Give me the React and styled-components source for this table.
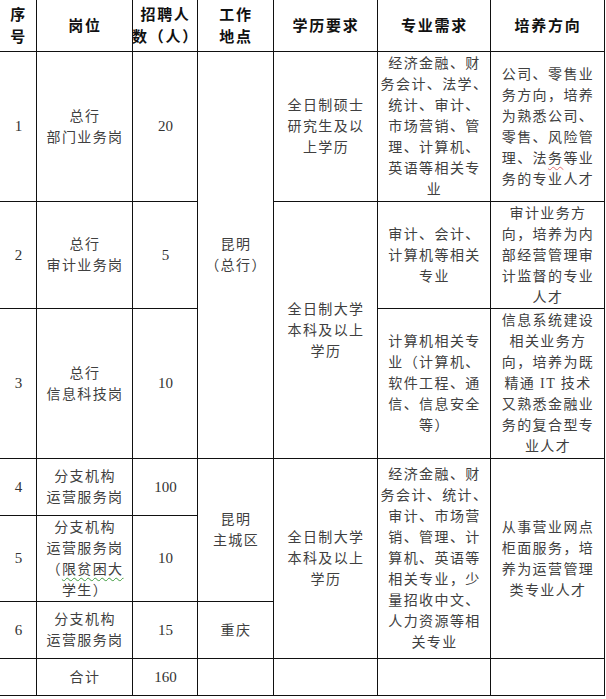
import React from "react";
import styled, {createGlobalStyle} from "styled-components";

const GlobalStyle = createGlobalStyle`
  body {
    margin: 0;
    background: #fff;
  }
`

const Sheet = styled.div`
  display: grid;
  grid-template-columns: 37px 96px 65px 76px 104px 113px 114px;
  grid-template-rows: 52px 150px 107px 150px 57px 86px 57px 37px;
  width: 605px;
  font-family: "Liberation Serif", "Noto Sans CJK SC", serif;
`

const Cell = styled.div`
  grid-column: ${p => p.$col};
  grid-row: ${p => p.$row} / span ${p => p.$span || 1};
  box-sizing: border-box;
  border-right: 1px solid #111;
  border-bottom: 1px solid #111;
  display: flex;
  flex-direction: column;
  align-items: center;
  justify-content: center;
  text-align: center;
  padding-left: 1px;
  font-size: 14px;
  line-height: 21px;
  letter-spacing: 1.4px;
  color: #404040;
`

const HeadCell = styled(Cell)`
  font-size: 15px;
  font-weight: 700;
  line-height: 22px;
  letter-spacing: 1.7px;
  color: #111;
`

const NumCell = styled(Cell)`
  font-size: 15px;
  letter-spacing: 0;
  color: #333;
`

const Line = styled.span`
  display: block;
  white-space: nowrap;
`

const Squiggle = styled.span`
  text-decoration: underline wavy ${p => p.$color};
  text-decoration-thickness: 1px;
  text-underline-offset: 3px;
`

const headers = [
    ["序", "号"],
    ["岗位"],
    ["招聘人", "数（人）"],
    ["工作", "地点"],
    ["学历要求"],
    ["专业需求"],
    ["培养方向"],
]

const numbers = [
    {row: 2, col: 1, text: "1"},
    {row: 3, col: 1, text: "2"},
    {row: 4, col: 1, text: "3"},
    {row: 5, col: 1, text: "4"},
    {row: 6, col: 1, text: "5"},
    {row: 7, col: 1, text: "6"},
    {row: 8, col: 1, text: ""},
    {row: 2, col: 3, text: "20"},
    {row: 3, col: 3, text: "5"},
    {row: 4, col: 3, text: "10"},
    {row: 5, col: 3, text: "100"},
    {row: 6, col: 3, text: "10"},
    {row: 7, col: 3, text: "15"},
    {row: 8, col: 3, text: "160"},
]

const bachelor = ["全日制大学", "本科及以上", "学历"]

const cells = [
    {row: 2, col: 2, lines: ["总行", "部门业务岗"]},
    {row: 3, col: 2, lines: ["总行", "审计业务岗"]},
    {row: 4, col: 2, lines: ["总行", "信息科技岗"]},
    {row: 5, col: 2, lines: ["分支机构", "运营服务岗"]},
    {
        row: 6, col: 2, lines: [
            "分支机构",
            "运营服务岗",
            <>（<Squiggle $color="#3f9a3f">限贫困大</Squiggle></>,
            "学生）",
        ]
    },
    {row: 7, col: 2, lines: ["分支机构", "运营服务岗"]},
    {row: 8, col: 2, lines: ["合计"]},

    {row: 2, col: 4, span: 3, lines: ["昆明", "（总行）"]},
    {row: 5, col: 4, span: 2, lines: ["昆明", "主城区"]},
    {row: 7, col: 4, lines: ["重庆"]},
    {row: 8, col: 4, lines: []},

    {row: 2, col: 5, lines: ["全日制硕士", "研究生及以", "上学历"]},
    {row: 3, col: 5, span: 2, lines: bachelor},
    {row: 5, col: 5, span: 3, lines: bachelor},
    {row: 8, col: 5, lines: []},

    {
        row: 2, col: 6, lines: [
            "经济金融、财", "务会计、法学、", "统计、审计、", "市场营销、管",
            "理、计算机、", "英语等相关专", "业",
        ]
    },
    {row: 3, col: 6, lines: ["审计、会计、", "计算机等相关", "专业"]},
    {row: 4, col: 6, lines: ["计算机相关专", "业（计算机、", "软件工程、通", "信、信息安全", "等）"]},
    {
        row: 5, col: 6, span: 3, lines: [
            "经济金融、财", "务会计、统计、", "审计、市场营", "销、管理、计", "算机、英语等",
            "相关专业，少", "量招收中文、", "人力资源等相", "关专业",
        ]
    },
    {row: 8, col: 6, lines: []},

    {
        row: 2, col: 7, lines: [
            "公司、零售业", "务方向，培养", "为熟悉公司、", "零售、风险管",
            <>理、法<Squiggle $color="#e07070">务</Squiggle>等业</>,
            "务的专业人才",
        ]
    },
    {row: 3, col: 7, lines: ["审计业务方", "向，培养为内", "部经营管理审", "计监督的专业", "人才"]},
    {
        row: 4, col: 7, lines: [
            "信息系统建设", "相关业务方", "向，培养为既", "精通 IT 技术",
            "又熟悉金融业", "务的复合型专", "业人才",
        ]
    },
    {row: 5, col: 7, span: 3, lines: ["从事营业网点", "柜面服务，培", "养为运营管理", "类专业人才"]},
    {row: 8, col: 7, lines: []},
]

export default function App() {
    return (
        <>
            <GlobalStyle/>
            <Sheet>
                {headers.map((lines, idx) => (
                    <HeadCell key={`h${idx}`} $row={1} $col={idx + 1}>
                        {lines.map((line, i) => <Line key={i}>{line}</Line>)}
                    </HeadCell>
                ))}
                {numbers.map(n => (
                    <NumCell key={`n${n.row}-${n.col}`} $row={n.row} $col={n.col}>{n.text}</NumCell>
                ))}
                {cells.map(c => (
                    <Cell key={`c${c.row}-${c.col}`} $row={c.row} $col={c.col} $span={c.span}>
                        {c.lines.map((line, i) => <Line key={i}>{line}</Line>)}
                    </Cell>
                ))}
            </Sheet>
        </>
    )
}
